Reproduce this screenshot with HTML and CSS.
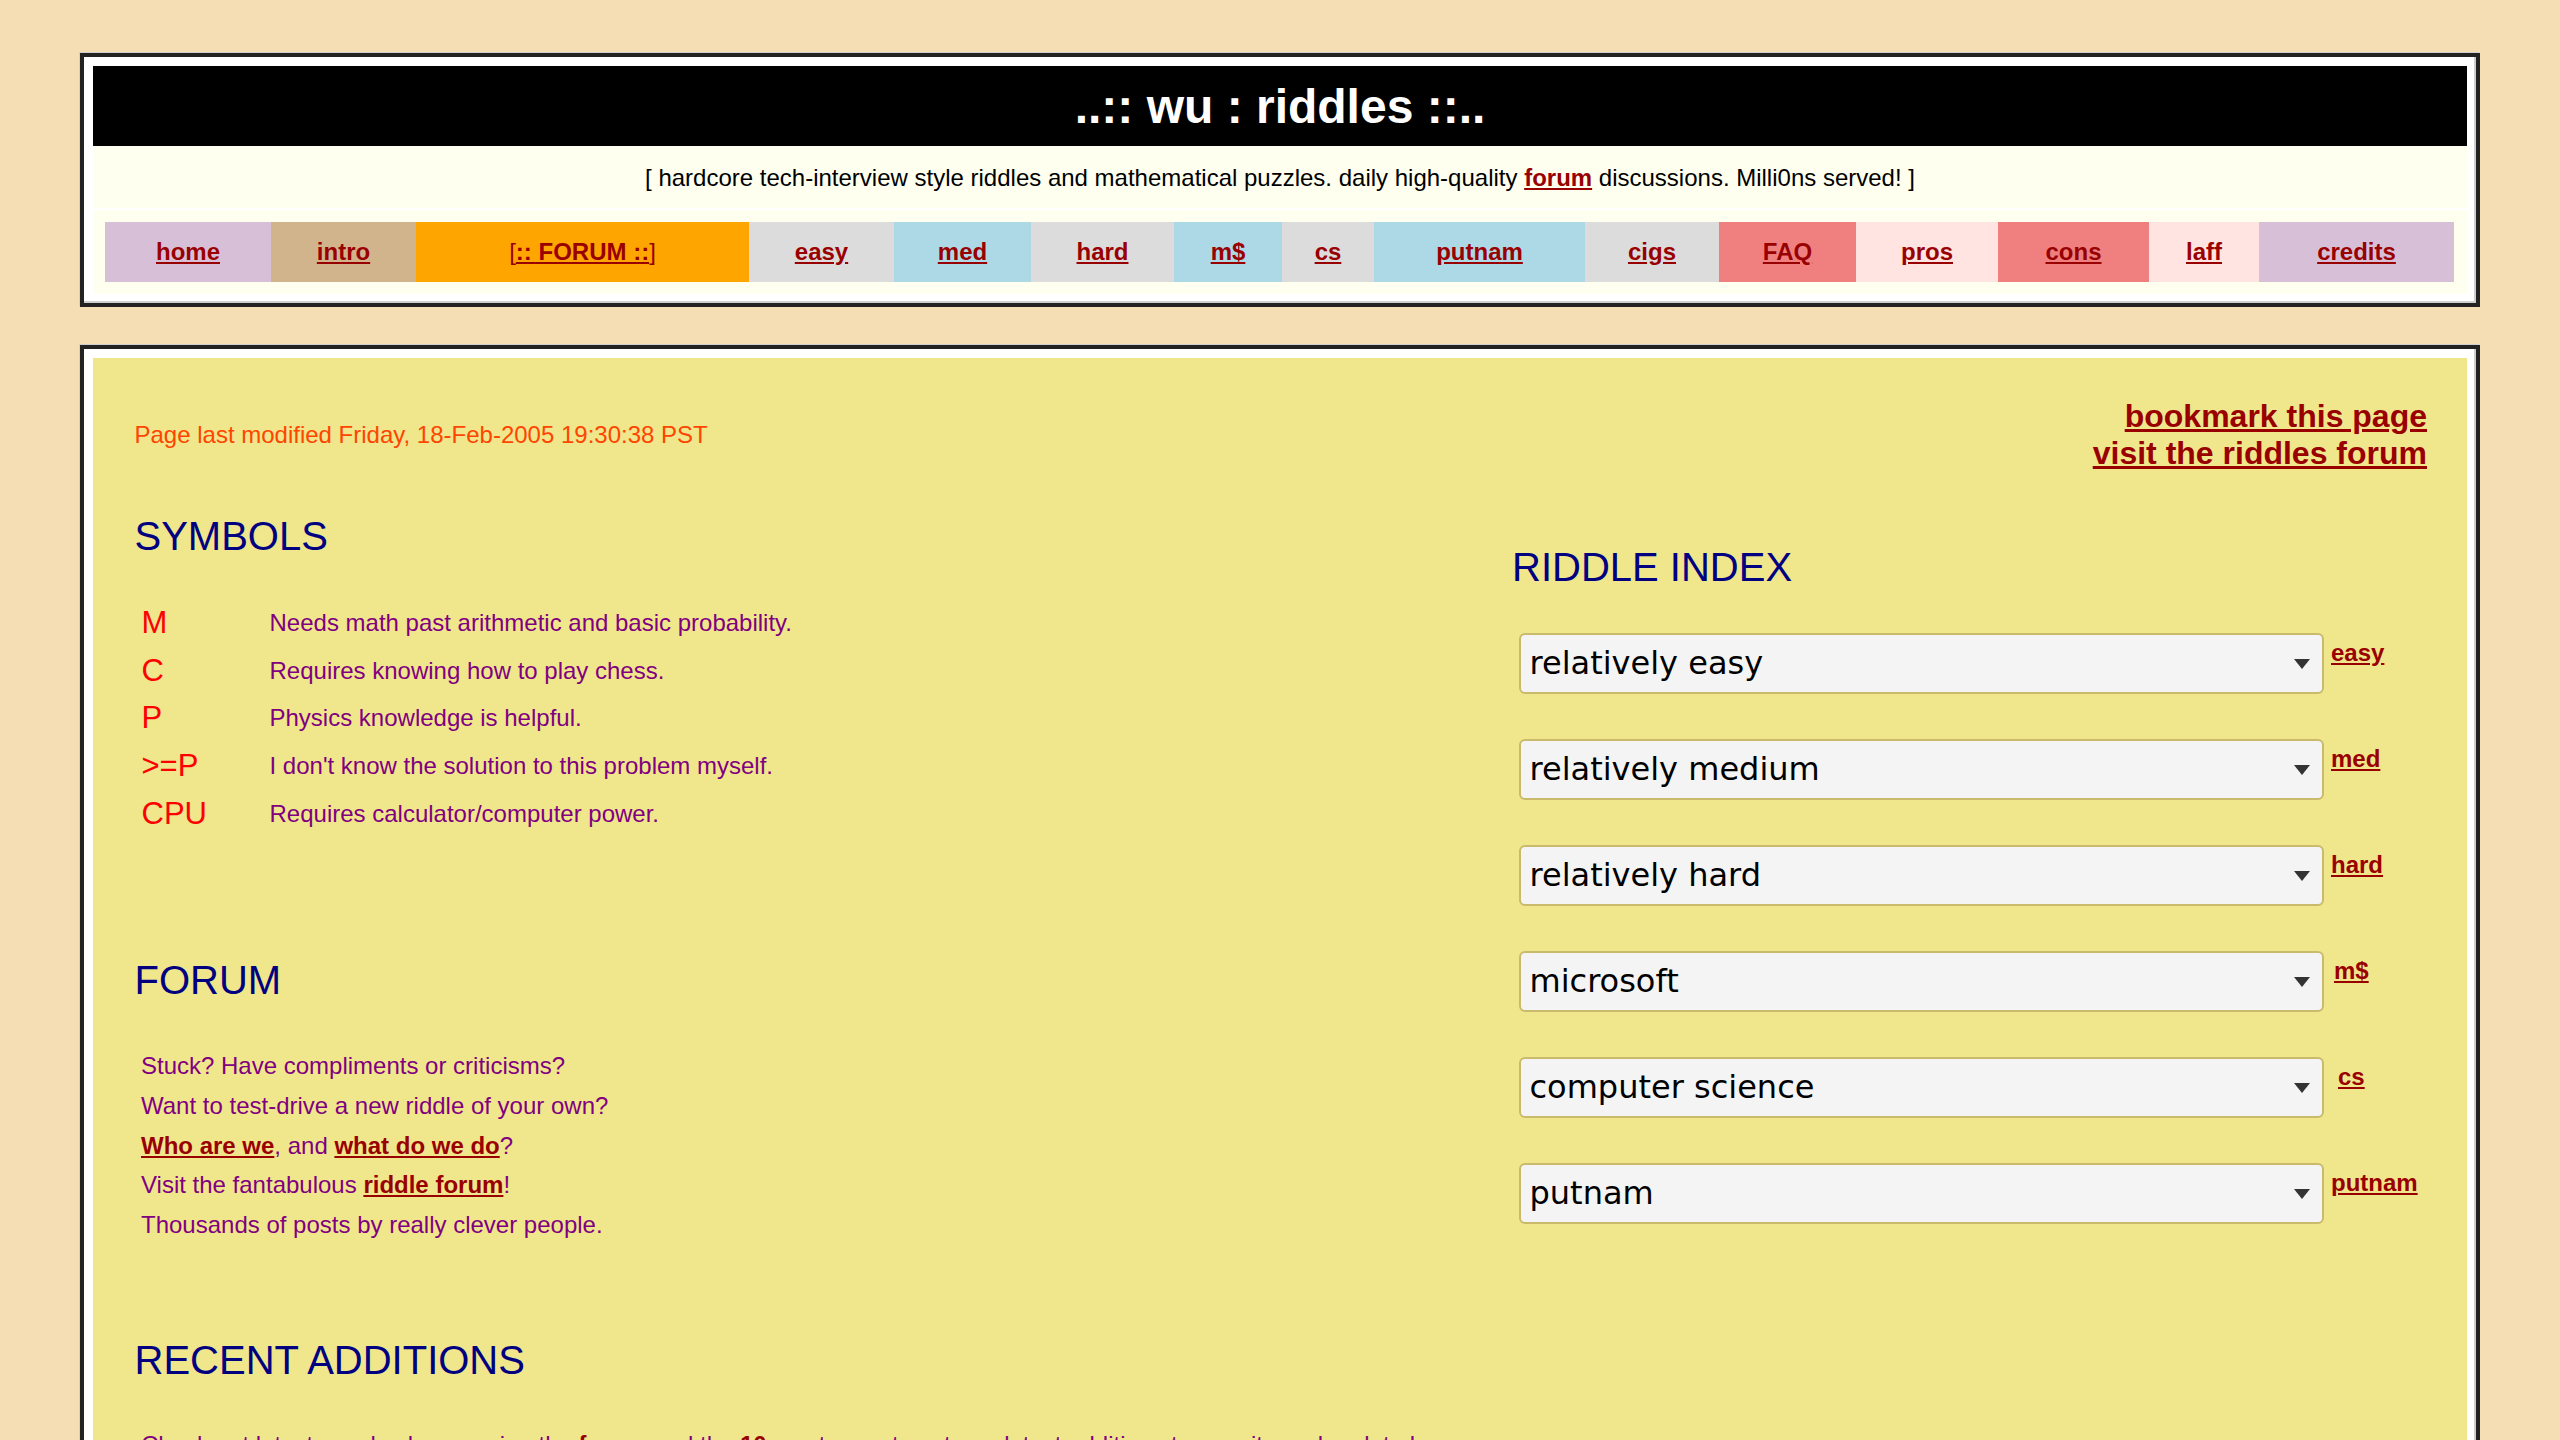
FILE: index.html
```html
<!DOCTYPE html>
<html>
<head>
<meta charset="utf-8">
<title>wu :: riddles</title>
<link rel="stylesheet" href="styles.css">
</head>
<body>
<div class="frame frame-top">
  <div class="title">..:: wu : riddles ::..</div>
  <div class="tagline">[ hardcore tech-interview style riddles and mathematical puzzles. daily high-quality&nbsp;<a href="#">forum</a>&nbsp;discussions. Milli0ns served! ]</div>
  <div class="navcell">
    <nav class="nav">
      <div class="nav-item bg-thistle"><a href="#">home</a></div>
      <div class="nav-item bg-tan"><a href="#">intro</a></div>
      <div class="nav-item bg-orange"><span class="red">[<a href="#">:: FORUM ::</a>]</span></div>
      <div class="nav-item bg-gray"><a href="#">easy</a></div>
      <div class="nav-item bg-blue"><a href="#">med</a></div>
      <div class="nav-item bg-gray"><a href="#">hard</a></div>
      <div class="nav-item bg-blue"><a href="#">m$</a></div>
      <div class="nav-item bg-gray"><a href="#">cs</a></div>
      <div class="nav-item bg-blue"><a href="#">putnam</a></div>
      <div class="nav-item bg-gray"><a href="#">cigs</a></div>
      <div class="nav-item bg-coral"><a href="#">FAQ</a></div>
      <div class="nav-item bg-rose"><a href="#">pros</a></div>
      <div class="nav-item bg-coral"><a href="#">cons</a></div>
      <div class="nav-item bg-rose"><a href="#">laff</a></div>
      <div class="nav-item bg-thistle"><a href="#">credits</a></div>
    </nav>
  </div>
</div>

<div class="frame frame-main">
  <div class="main">
    <div class="toprow">
      <div class="modified">Page last modified Friday, 18-Feb-2005 19:30:38 PST</div>
      <div class="quick">
        <a href="#">bookmark this page</a>
        <a href="#">visit the riddles forum</a>
      </div>
    </div>

    <div class="cols">
      <div class="left">
        <h2 class="sec sec-symbols">SYMBOLS</h2>
        <div class="symbols">
          <div class="sym">M</div><div class="desc">Needs math past arithmetic and basic probability.</div>
          <div class="sym">C</div><div class="desc">Requires knowing how to play chess.</div>
          <div class="sym">P</div><div class="desc">Physics knowledge is helpful.</div>
          <div class="sym">&gt;=P</div><div class="desc">I don't know the solution to this problem myself.</div>
          <div class="sym">CPU</div><div class="desc">Requires calculator/computer power.</div>
        </div>

        <h2 class="sec sec-forum">FORUM</h2>
        <div class="lines lines-forum">
          <div>Stuck? Have compliments or criticisms?</div>
          <div>Want to test-drive a new riddle of your own?</div>
          <div><a href="#">Who are we</a>, and <a href="#">what do we do</a>?</div>
          <div>Visit the fantabulous <a href="#">riddle forum</a>!</div>
          <div>Thousands of posts by really clever people.</div>
        </div>

        <h2 class="sec sec-recent">RECENT ADDITIONS</h2>
        <div class="lines lines-recent">
          <div>Check out latest puzzles by perusing the <a href="#">forum</a> and the <a href="#">10</a> most recent posts, or latest additions to our site and update log below.</div>
          <div>New riddles are added to the index as they are solved and written up.</div>
          <div>Older additions are archived on the <a href="#">update</a> page.</div>
        </div>
      </div>

      <div class="right">
        <h2 class="sec sec-index">RIDDLE INDEX</h2>
        <div class="index-rows">
          <div class="idx-row">
            <div class="select-wrap"><select class="idx-select"><option>relatively easy</option></select></div>
            <a class="idx-label" href="#">easy</a>
          </div>
          <div class="idx-row">
            <div class="select-wrap"><select class="idx-select"><option>relatively medium</option></select></div>
            <a class="idx-label" href="#">med</a>
          </div>
          <div class="idx-row">
            <div class="select-wrap"><select class="idx-select"><option>relatively hard</option></select></div>
            <a class="idx-label" href="#">hard</a>
          </div>
          <div class="idx-row">
            <div class="select-wrap"><select class="idx-select"><option>microsoft</option></select></div>
            <a class="idx-label idx-label-ms" href="#">m$</a>
          </div>
          <div class="idx-row">
            <div class="select-wrap"><select class="idx-select"><option>computer science</option></select></div>
            <a class="idx-label idx-label-cs" href="#">cs</a>
          </div>
          <div class="idx-row">
            <div class="select-wrap"><select class="idx-select"><option>putnam</option></select></div>
            <a class="idx-label" href="#">putnam</a>
          </div>
        </div>
      </div>
    </div>
  </div>
</div>
</body>
</html>
```

FILE: styles.css
```css
html {
  background: #f5deb3;
}

body {
  margin: 0;
  padding: 53px 80px 40px;
  background: #f5deb3;
  font-family: "Liberation Sans", Arial, sans-serif;
  font-size: 24px;
  color: #000;
}

a {
  color: #990000;
  font-weight: bold;
  text-decoration: underline;
}

.red {
  color: #990000;
}

/* ---------- framed boxes ---------- */
.frame {
  background: #fff;
  border: 4px solid #222;
  padding: 9px;
  box-shadow: -1px -1px 0 #cfcfcf, inset -2px -2px 0 #cfcfcf;
}

.frame-main {
  margin-top: 38px;
}

/* ---------- header ---------- */
.title {
  height: 80px;
  background: #000;
  color: #fff;
  font-size: 48px;
  font-weight: bold;
  display: flex;
  align-items: center;
  justify-content: center;
}

.tagline {
  height: 62px;
  box-sizing: border-box;
  padding-top: 2px;
  margin-bottom: 2px;
  background: #fffff0;
  display: flex;
  align-items: center;
  justify-content: center;
  white-space: nowrap;
}

.navcell {
  background: #fffff0;
  padding: 12px;
}

.nav {
  display: grid;
  grid-template-columns: 166px 145px 333px 145px 137px 143px 108px 92px 211px 134px 137px 142px 151px 110px 195px;
  height: 60px;
}

.nav-item {
  display: flex;
  align-items: center;
  justify-content: center;
}

.bg-thistle { background: #d8bfd8; }
.bg-tan { background: #d2b48c; }
.bg-orange { background: #ffa500; }
.bg-gray { background: #dcdcdc; }
.bg-blue { background: #add8e6; }
.bg-coral { background: #f08080; }
.bg-rose { background: #ffe4e1; }

/* ---------- main area ---------- */
.main {
  background: #f0e68c;
  padding: 40px 40px 40px 41.5px;
  min-height: 1300px;
}

.toprow {
  display: flex;
  align-items: center;
  justify-content: space-between;
}

.modified {
  color: #ff4500;
}

.quick {
  display: flex;
  flex-direction: column;
  align-items: flex-end;
  font-size: 32px;
}

.cols {
  display: grid;
  grid-template-columns: 1375.5px 1fr;
}

.sec {
  margin: 0;
  font-size: 40px;
  font-weight: normal;
  line-height: 46px;
  color: #000080;
}

.sec-symbols { margin-top: 41px; }
.sec-forum { margin-top: 119px; }
.sec-recent { margin-top: 92px; }
.sec-index { margin-top: 72px; margin-left: 2px; }

.symbols {
  margin: 40px 0 0 7px;
  display: grid;
  grid-template-columns: 128px auto;
  grid-auto-rows: 47.8px;
  align-items: center;
}

.sym {
  color: #ff0000;
  font-size: 31px;
}

.desc {
  color: #800080;
}

.lines {
  margin-left: 6.5px;
  color: #800080;
  line-height: 39.8px;
}

.lines-forum { margin-top: 43px; }
.lines-recent { margin-top: 42px; }

/* ---------- riddle index ---------- */
.index-rows {
  margin: 43px 0 0 8.5px;
}

.idx-row {
  display: flex;
  align-items: flex-start;
  margin-bottom: 45.5px;
}

.select-wrap {
  position: relative;
  width: 805px;
  height: 60.5px;
}

.select-wrap::after {
  content: "";
  position: absolute;
  right: 14px;
  top: 50%;
  margin-top: -4px;
  border-left: 8.5px solid transparent;
  border-right: 8.5px solid transparent;
  border-top: 10px solid #333;
}

.idx-select {
  -webkit-appearance: none;
  appearance: none;
  width: 100%;
  height: 100%;
  margin: 0;
  padding: 0 40px 0 9px;
  box-sizing: border-box;
  border: 2px solid #c9bb6b;
  border-radius: 6px;
  background: #f4f4f4;
  color: #000;
  font-family: "DejaVu Sans", Verdana, sans-serif;
  font-size: 32px;
}

.idx-label {
  margin: 6px 0 0 7.5px;
}

.idx-label-ms { margin-left: 10.5px; }
.idx-label-cs { margin-left: 14.5px; }
```
